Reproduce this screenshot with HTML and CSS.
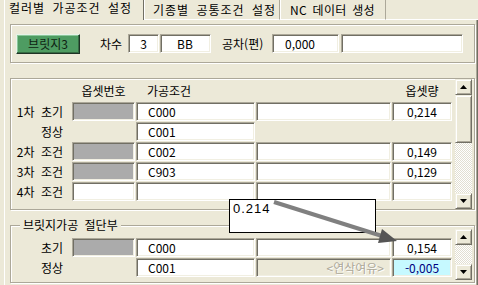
FILE: index.html
```html
<!DOCTYPE html>
<html lang="ko">
<head>
    <meta charset="UTF-8">
    <meta name="viewport" content="width=device-width, initial-scale=1.0">
    <title>가공조건 설정</title>
    <link rel="stylesheet" href="styles.css">
</head>
<body>
    <div class="tabctl">
        <div class="tabs">
            <div class="tab active">컬러별 가공조건 설정</div>
            <div class="tab t2">기종별 공통조건 설정</div>
            <div class="tab t3">NC 데이터 생성</div>
            <div class="tab-fill"></div>
        </div>

        <div class="page">
            <fieldset class="group g1">
                <button class="btn-green">브릿지3</button>
                <span class="lbl lbl-cha">차수</span>
                <div class="field w-cha center">3</div>
                <div class="field w-bb">BB</div>
                <span class="lbl lbl-tol">공차(편)</span>
                <div class="field w-tol">0,000</div>
                <div class="field w-memo"></div>
            </fieldset>

            <fieldset class="group g2">
                <div class="grid">
                    <div class="row head">
                        <span class="rlabel"></span>
                        <span class="c1 center">옵셋번호</span>
                        <span class="c2 pad">가공조건</span>
                        <span class="c3"></span>
                        <span class="c4 center">옵셋량</span>
                    </div>
                    <div class="row">
                        <span class="rlabel">1차 초기</span>
                        <div class="field c1 gray"></div>
                        <div class="field c2 pad">C000</div>
                        <div class="field c3"></div>
                        <div class="field c4 center">0,214</div>
                    </div>
                    <div class="row">
                        <span class="rlabel">정상</span>
                        <span class="c1"></span>
                        <div class="field c2 pad">C001</div>
                    </div>
                    <div class="row">
                        <span class="rlabel">2차 조건</span>
                        <div class="field c1 gray"></div>
                        <div class="field c2 pad">C002</div>
                        <div class="field c3"></div>
                        <div class="field c4 center">0,149</div>
                    </div>
                    <div class="row">
                        <span class="rlabel">3차 조건</span>
                        <div class="field c1 gray"></div>
                        <div class="field c2 pad">C903</div>
                        <div class="field c3"></div>
                        <div class="field c4 center">0,129</div>
                    </div>
                    <div class="row">
                        <span class="rlabel">4차 조건</span>
                        <div class="field c1"></div>
                        <div class="field c2 pad"></div>
                        <div class="field c3"></div>
                        <div class="field c4 center"></div>
                    </div>
                </div>
                <div class="vscroll sb-main">
                    <div class="sb-btn up"></div>
                    <div class="sb-thumb"></div>
                    <div class="sb-track"></div>
                    <div class="sb-btn down"></div>
                </div>
            </fieldset>

            <fieldset class="group g3">
                <legend>브릿지가공 절단부</legend>
                <div class="grid grid-cut">
                    <div class="row">
                        <span class="rlabel">초기</span>
                        <div class="field c1 gray"></div>
                        <div class="field c2 pad">C000</div>
                        <div class="field c3"></div>
                        <div class="field c4 center">0,154</div>
                    </div>
                    <div class="row">
                        <span class="rlabel">정상</span>
                        <span class="c1"></span>
                        <div class="field c2 pad">C001</div>
                        <div class="field c3 dis">&lt;연삭여유&gt;</div>
                        <div class="field c4 center cyan">-0,005</div>
                    </div>
                </div>
                <div class="vscroll sb-cut">
                    <div class="sb-btn up"></div>
                    <div class="sb-track"></div>
                    <div class="sb-btn down"></div>
                </div>
            </fieldset>
        </div>
    </div>

    <div class="callout">0.214</div>
    <svg class="arrow" width="478" height="285" viewBox="0 0 478 285">
        <line x1="274" y1="202" x2="382" y2="236" stroke="#808080" stroke-width="4"/>
        <polygon points="397,241 382,229 378,243" fill="#555"/>
    </svg>
</body>
</html>
```

FILE: styles.css
```css
* {
    box-sizing: border-box;
}
body {
    margin: 0;
    width: 478px;
    height: 285px;
    overflow: hidden;
    position: relative;
    background-color: #ece9d8;
    font-family: "Noto Sans CJK KR", "Noto Sans", sans-serif;
    font-size: 12px;
    color: #000;
}

/* tab strip */
.tabctl {
    margin-left: 4px;
}
.tabs {
    display: flex;
    height: 20px;
}
.tab {
    height: 20px;
    padding-top: 3px;
    line-height: 14px;
    font-size: 12px;
    letter-spacing: 1px;
    word-spacing: 3px;
    white-space: nowrap;
    overflow: hidden;
    border-left: 1px solid #fff;
    border-right: 1px solid #aca899;
    border-bottom: 1px solid #fff;
}
.tab.active {
    width: 140px;
    padding: 1px 0 0 4px;
    border-bottom: none;
    border-right-color: #716f64;
}
.tab.t2 {
    width: 136px;
    padding-left: 8px;
}
.tab.t3 {
    width: 106px;
    padding-left: 9px;
    letter-spacing: 0.3px;
    word-spacing: 2px;
}
.tab-fill {
    flex: 1;
    border-bottom: 1px solid #fff;
}
.page {
    height: 265px;
    padding: 4px 0 0 5px;
    border-left: 1px solid #fff;
    border-right: 1px solid #716f64;
    box-shadow: inset -1px 0 #aca899;
}

/* group boxes */
.group {
    margin: 0;
    padding: 0;
    min-width: 0;
    width: 465px;
    border: 1px solid #aca899;
    box-shadow: inset 1px 1px #fff, 1px 1px #fff;
}
.g1 {
    display: flex;
    align-items: center;
    height: 39px;
    padding-left: 5px;
}
.g2 {
    display: flex;
    align-items: flex-start;
    height: 132px;
    margin-top: 15px;
}
.g3 {
    display: flex;
    align-items: flex-start;
    margin-top: 8px;
    padding-bottom: 2px;
}
.g3 legend {
    margin-left: 9px;
    padding: 0 3px;
    line-height: 14px;
    word-spacing: 3px;
    background-color: #ece9d8;
}

/* inputs */
.field {
    display: flex;
    align-items: center;
    height: 19px;
    line-height: 14px;
    white-space: nowrap;
    background-color: #fff;
    border: 1px solid;
    border-color: #aca899 #fff #fff #aca899;
    box-shadow: inset 1px 1px #716f64, inset -1px -1px #f1efe2;
}
.field.gray {
    background-color: #ababab;
}
.field.dis {
    justify-content: flex-end;
    padding-right: 6px;
    background-color: #ece9d8;
    color: #aca899;
    text-shadow: 1px 1px #fff;
}
.field.cyan {
    background-color: #c6f9ff;
    color: #000080;
}
.center {
    justify-content: center;
    text-align: center;
}
.pad {
    padding-left: 11px;
}

.btn-green {
    width: 64px;
    height: 20px;
    padding: 0;
    font-family: inherit;
    font-size: 12px;
    color: #0f1f12;
    background-color: #4e9c62;
    border: 1px solid;
    border-color: #e6f3e8 #1f3326 #1f3326 #e6f3e8;
    box-shadow: inset -1px -1px #356b43, inset 1px 1px #8cc79a;
}
.lbl {
    white-space: nowrap;
}
.lbl-cha {
    width: 28px;
    margin-left: 20px;
}
.w-cha {
    width: 31px;
}
.w-bb {
    width: 51px;
    margin-left: 1px;
    padding-left: 16px;
}
.lbl-tol {
    width: 50px;
    margin-left: 11px;
}
.w-tol {
    width: 67px;
    padding-left: 12px;
}
.w-memo {
    width: 122px;
    margin-left: 2px;
}

/* offset table */
.grid {
    display: flex;
    flex-direction: column;
    gap: 1px;
    width: 441px;
}
.grid-cut {
    padding-top: 6px;
}
.row {
    display: flex;
    align-items: center;
    gap: 1px;
    height: 19px;
}
.row.head {
    height: 22px;
}
.rlabel {
    width: 60px;
    padding-right: 8px;
    text-align: right;
    word-spacing: 3px;
    white-space: nowrap;
}
.c1 {
    width: 63px;
}
.c2 {
    width: 119px;
}
.c3 {
    width: 135px;
}
.c4 {
    width: 60px;
}
.head .c1,
.head .c4 {
    display: block;
}

/* scrollbars */
.vscroll {
    display: flex;
    flex-direction: column;
    width: 17px;
    margin-left: 3px;
}
.sb-main {
    height: 130px;
}
.sb-cut {
    height: 51px;
    margin-top: -3px;
}
.sb-btn,
.sb-thumb {
    flex: none;
    display: flex;
    align-items: center;
    justify-content: center;
    height: 16px;
    background-color: #ece9d8;
    border: 1px solid;
    border-color: #f1efe2 #716f64 #716f64 #f1efe2;
    box-shadow: inset 1px 1px #fff, inset -1px -1px #aca899;
}
.sb-thumb {
    height: 48px;
}
.sb-track {
    flex: 1;
    background: repeating-conic-gradient(#fff 0 25%, #e2dfd2 0 50%) 0 0 / 2px 2px;
}
.sb-btn::after {
    content: "";
    width: 7px;
    height: 4px;
    background-color: #000;
}
.sb-btn.up::after {
    clip-path: polygon(50% 0, 100% 100%, 0 100%);
}
.sb-btn.down::after {
    clip-path: polygon(0 0, 100% 0, 50% 100%);
}

/* note over the table */
.callout {
    position: absolute;
    left: 229px;
    top: 199px;
    width: 147px;
    height: 34px;
    padding: 2px 0 0 3px;
    line-height: 14px;
    font-family: "Liberation Sans", Arial, sans-serif;
    font-size: 13px;
    letter-spacing: 1px;
    background-color: #fff;
    border: 1px solid #000;
}
.arrow {
    position: absolute;
    left: 0;
    top: 0;
    pointer-events: none;
}
```
